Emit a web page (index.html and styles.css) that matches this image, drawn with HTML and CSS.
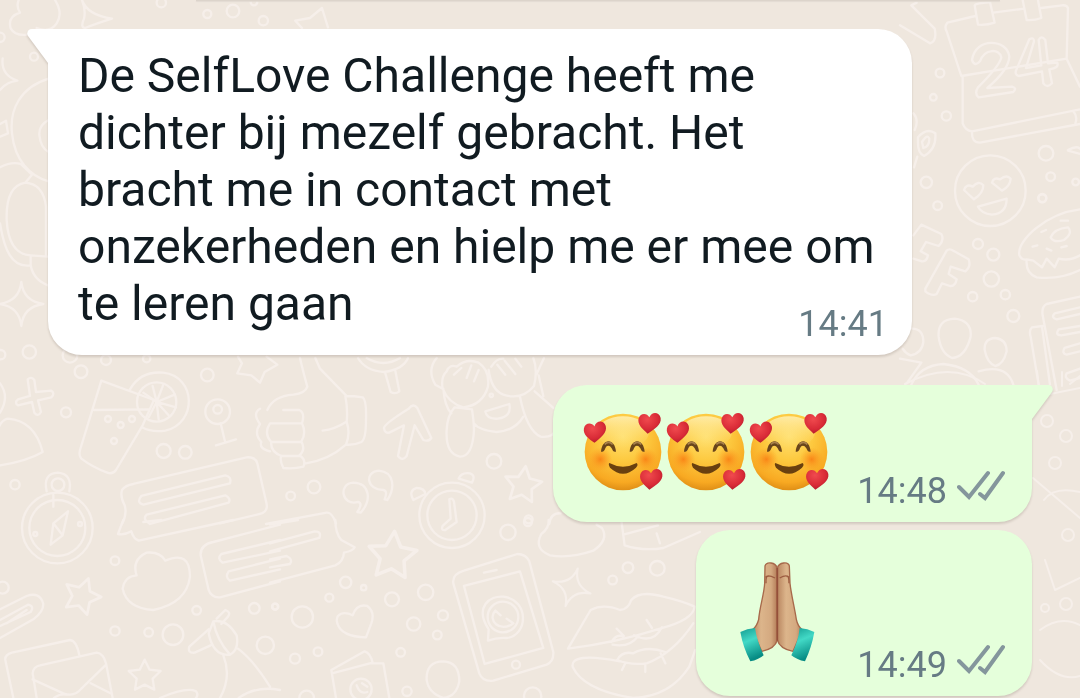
FILE: index.html
```html
<!DOCTYPE html>
<html lang="nl">
<head>
<meta charset="utf-8">
<meta name="viewport" content="width=device-width, initial-scale=1">
<title>Chat</title>
<link rel="stylesheet" href="styles.css">
</head>
<body>
<svg class="wallpaper" viewBox="0 0 1080 698" preserveAspectRatio="xMinYMin slice" aria-hidden="true">
  <defs>
    <path id="star" d="M0-44 15-14 48-10 24 13 29 46 0 31-29 46-24 13-48-10-15-14Z"/>
    <path id="spark" d="M0-66Q6-8 66 0Q6 8 0 66Q-6 8-66 0Q-6-8 0-66Z"/>
  </defs>
  <!-- top left -->
  <g transform="scale(.3333)">
    <path d="M56 0Q48 20 60 38Q22 50 32 85Q45 108 80 104M165 0Q190 40 170 70Q150 100 110 84M246 0Q262 45 336 56Q290 70 256 84Q240 84 252 56Q258 30 246 0M886 62 930 54 966 24 984 82M886 62 906 84"/>
    <circle cx="622" cy="42" r="12"/><circle cx="699" cy="33" r="19"/><circle cx="790" cy="62" r="14"/><circle cx="484" cy="8" r="14"/><circle cx="102" cy="170" r="12"/><circle cx="0" cy="112" r="14"/><circle cx="762" cy="6" r="10"/>
    <path d="M8 175Q2 225 52 242Q20 246 0 270M146 236C60 262 28 330 36 400C44 480 90 530 146 544M146 360Q116 375 118 405Q122 445 146 456M0 372 18 362 24 400 0 410M0 502Q34 484 62 492L96 524 76 548M0 670C12 745 34 805 92 796Q100 840 144 856M76 548C30 556 18 600 20 660C24 730 50 764 92 766L144 770M76 548Q130 552 138 620V766M92 766V796"/>
    <use href="#spark" x="64" y="912"/>
    <circle cx="88" cy="1056" r="20"/><circle cx="2" cy="1064" r="14"/>
  </g>
  <!-- left middle -->
  <g transform="translate(0 350) scale(.3333)">
    <circle cx="210" cy="16" r="22"/><circle cx="243" cy="65" r="19"/><circle cx="318" cy="30" r="15"/><circle cx="440" cy="26" r="11"/><circle cx="622" cy="75" r="19"/><circle cx="198" cy="187" r="15"/><circle cx="45" cy="404" r="14"/><circle cx="491" cy="303" r="21"/><circle cx="556" cy="307" r="19"/>
    <path d="M83 88Q94 78 103 90L108 126 154 122Q166 130 154 142L114 151 123 186Q114 202 103 188L96 156 54 166Q42 158 54 148L90 138ZM0 100Q30 140 0 188M-10 250Q0 210 24 206Q104 212 128 306Q80 334 0 346"/>
    <path d="M304 92 462 150 428 226 348 360Q338 374 322 368Q278 352 244 326Q236 316 240 300ZM282 180 446 178M390 118Q422 62 490 68C590 80 592 220 496 242Q455 248 426 232"/>
    <circle cx="470" cy="156" r="59"/><path d="M470 156 430 128M470 156 458 108M470 156 490 104M470 156 524 134M470 156 528 172M470 156 506 196M470 156 476 208M470 156 446 202"/>
    <circle cx="324" cy="207" r="9"/><circle cx="396" cy="207" r="9"/><circle cx="362" cy="225" r="9"/><circle cx="342" cy="273" r="9"/>
    <circle cx="653" cy="185" r="37"/><circle cx="653" cy="178" r="13"/><path d="M662 220 676 278M648 286 708 268M714 20 726 40 712 70 754 76 780 98 794 66 832 44 800 20"/>
    <path d="M366 522Q382 492 374 466 360 440 366 420 376 406 400 402L740 322Q766 320 772 340L800 462Q804 486 780 492L660 520M424 438 676 376Q696 380 690 400L430 464Q408 458 424 438ZM440 494 676 436Q694 446 686 458L450 522Q426 508 440 494Z"/>
    <circle cx="174" cy="404" r="19"/><path d="M140 424Q128 370 174 368Q218 372 208 424M160 435V470"/>
    <circle cx="172" cy="534" r="106"/><circle cx="172" cy="534" r="84"/>
    <path d="M204 484 188 556 152 584 160 520ZM160 520 188 556"/>
    <circle cx="240" cy="522" r="6"/><circle cx="106" cy="552" r="6"/>
  </g>
  <!-- centre: thumb, arrow, clock, waving figure -->
  <g transform="translate(270 350) scale(.3333)">
    <path d="M90 24Q98 60 112 110Q106 130 70 134Q10 138-8 180M136 24 150 56 228 136M40 180H88Q106 188 96 220 110 250 94 274 108 300 88 316 110 330 100 350 70 358 40 354 28 330 34 318 0 304 4 276-20 250 0 220H96M4 276H94M34 318H88M-30 176Q-54 190-30 222Q-50 250-26 276Q-34 296 0 304M158 242Q194 238 228 216M226 138Q254 138 278 142Q290 150 288 210Q288 268 274 276Q254 286 228 284Q242 250 230 216Q234 180 226 138M228 284Q176 330 108 340"/>
    <path d="M264 24Q286 62 342 66Q400 58 414 24M290 24Q340 54 390 24M346 70 362 126Q376 134 388 124L376 62"/>
    <path d="M342 234Q342 222 416 176Q430 158 442 174L484 264Q476 276 460 270L434 226 410 318Q396 336 384 318L402 226 358 248Q344 250 342 234Z"/>
    <path d="M500 24Q470 60 496 104L518 116M518 116Q512 80 530 64Q538 42 560 50Q590 24 626 38Q660 60 654 110Q638 166 580 172Q536 160 518 116M552 74 574 54M590 84 604 46M612 94 626 60M656 60Q664 120 700 134Q756 152 792 108Q804 60 790 24M664 50Q680 24 700 26M682 44 706 74M704 32 736 72M736 26 754 50M800 72 822 24M806 76 820 138M520 116Q524 170 544 190M606 178Q612 218 612 240 608 320 570 320 526 312 530 240 532 196 554 172ZM612 220Q626 240 680 246Q736 242 760 200M750 140Q770 240 812 260 850 264 856 240M794 124 850 174M646 184 718 162Q726 200 684 206Q650 208 646 184Z"/>
    <circle cx="664" cy="136" r="5"/><circle cx="672" cy="334" r="22"/><circle cx="132" cy="411" r="19"/><circle cx="62" cy="438" r="13"/><circle cx="776" cy="508" r="12"/>
    <path d="M262 486Q280 460 264 456C214 470 204 400 250 398C300 400 306 450 272 488ZM344 448Q354 422 340 420C290 420 282 366 326 362C376 366 374 418 352 450Z"/>
    <use href="#star" transform="translate(760 399) rotate(8) scale(1.15)"/>
    <circle cx="546" cy="496" r="98"/><circle cx="546" cy="496" r="74"/>
    <path d="M430 450Q414 422 440 414 464 414 466 432ZM566 386Q574 366 600 370 618 376 606 398ZM538 448Q548 442 552 455L560 516 526 540Q512 542 518 528L542 506ZM-12 522 170 488Q186 486 198 520M838 522Q842 488 872 490"/>
  </g>
  <!-- bottom left -->
  <g transform="translate(0 520) scale(.3333)">
    <path d="M370 0Q362 20 354 42Q374 46 394 34Q400 56 416 62L700 0M430 6 484 0"/>
    <circle cx="345" cy="122" r="13"/><circle cx="8" cy="203" r="18"/><circle cx="345" cy="333" r="14"/><circle cx="446" cy="337" r="13"/><circle cx="519" cy="344" r="31"/><circle cx="590" cy="271" r="13"/><circle cx="763" cy="265" r="16"/><circle cx="796" cy="376" r="26"/><circle cx="826" cy="260" r="9"/>
    <path d="M410 166Q394 120 440 98Q480 94 496 122Q570 90 570 170Q560 250 460 270Q380 264 368 206Q374 168 410 166Z"/>
    <use href="#star" transform="translate(248 223) rotate(20) scale(1.15)"/>
    <use href="#star" transform="translate(434 463)"/>
    <path d="M840 14 640 66Q600 74 602 106L626 210Q634 234 660 232L840 184M840 60 664 102Q650 116 668 128L840 92M840 116 686 154Q674 172 690 182L840 148"/>
    <path d="M0 268 80 228Q120 214 130 252Q130 276 100 298L0 354M0 300 84 254Q104 258 92 276L0 318M20 310 80 270"/>
    <path d="M40 534 16 420Q14 404 36 398L210 360Q230 362 238 406M110 534 98 460Q100 440 120 436L290 398Q310 400 318 430L338 534M98 478 190 520Q224 532 244 506L316 436M162 534Q180 520 200 524M272 490 336 522"/>
    <path d="M650 296 676 270Q694 276 684 290L664 312M626 328 568 380Q562 400 584 398L632 376M640 304Q680 296 710 346 718 390 690 404 640 410 626 340ZM640 304Q650 360 690 404M714 386Q760 420 810 500M670 406Q696 470 660 534M716 534Q770 496 840 510M480 534Q560 500 588 514Q596 524 588 534"/>
  </g>
  <!-- bottom centre: phone, lips -->
  <g transform="translate(270 520) scale(.3333)">
    <path d="M0 14 84 0M196 0Q196 40 214 60L254 82Q250 92 222 98Q220 126 196 136L0 188M0 70 134 34Q156 34 148 54L0 94M0 118 50 108Q70 118 60 132L0 142"/>
    <use href="#star" transform="translate(368 100) rotate(5) scale(1.5)"/>
    <circle cx="227" cy="187" r="17"/><circle cx="281" cy="203" r="8"/><circle cx="178" cy="233" r="12"/><circle cx="15" cy="260" r="9"/><circle cx="97" cy="291" r="32"/><circle cx="366" cy="238" r="21"/><circle cx="467" cy="217" r="23"/><circle cx="431" cy="312" r="20"/><circle cx="519" cy="286" r="15"/><circle cx="502" cy="345" r="13"/><circle cx="75" cy="416" r="15"/><circle cx="144" cy="395" r="13"/><circle cx="392" cy="397" r="13"/><circle cx="411" cy="514" r="14"/><circle cx="714" cy="37" r="23"/><circle cx="774" cy="6" r="12"/><circle cx="1028" cy="180" r="13"/><circle cx="1074" cy="143" r="16"/><circle cx="1162" cy="145" r="22"/><circle cx="788" cy="528" r="26"/><circle cx="110" cy="534" r="22"/>
    <path d="M204 288Q220 272 248 286Q260 250 292 258Q316 276 304 310L288 352Q214 350 202 310Q198 296 204 288ZM470 480Q468 424 520 424 568 426 568 484 560 530 520 534 476 520 470 480ZM198 534 184 450 284 394Q302 400 308 428L186 460M300 430H340L358 534"/>
    <circle cx="273" cy="508" r="32"/><path d="M260 496Q270 524 292 516M276 490 292 500"/>
    <path d="M582 152 742 102Q768 102 778 124L850 396Q852 424 830 434L670 482Q638 486 628 460L550 190Q546 162 582 152ZM582 198 750 154 820 384 644 432ZM642 158 680 150"/>
    <circle cx="738" cy="434" r="12"/><path d="M654 362 656 328C612 260 660 226 700 230C780 240 774 348 710 354Q680 352 654 362ZM676 272C650 300 690 340 730 310M676 272 692 286M730 310 710 296"/><circle cx="699" cy="291" r="46"/>
    <use href="#spark" transform="translate(905 202) rotate(18) scale(.9)"/>
    <path d="M836 0Q838 24 814 42Q790 86 840 106Q900 116 970 92 1018 60 996 24L980 14M1054 0 1064 76Q1120 94 1180 84L1290 36M1060 44 1164 16M1160 40 1170 70"/>
    <path d="M894 386 962 270Q1000 250 1050 270 1074 270 1084 240 1110 210 1180 230 1240 244 1274 260Q1270 300 1170 326Q1040 368 894 386ZM1024 366Q1040 340 1060 350M1028 374Q1080 384 1106 346M1092 346Q1150 374 1176 322M1040 326 1062 348M1130 300 1146 324M1050 424Q900 396 908 440Q940 510 1090 534Q1200 530 1258 440L1276 390M1270 310Q1210 400 1130 430 1080 436 1042 420 1056 392 1090 400 1130 376 1186 396M1066 430 1056 450M1126 430V456M1172 400 1186 430"/>
  </g>
  <!-- top right: calendar, emoji -->
  <g transform="translate(900) scale(.3333)">
    <path d="M0 76 90 130Q112 124 104 86L34 16 50 8M226 48 142 68Q132 80 140 94L184 228 500 176 504 24Q500 14 486 16L424 24M280 38 372 26M224 16Q226 10 270 6L284 68Q260 76 234 74ZM368 0 380 60Q402 62 424 54L414 0M188 228V370Q196 392 216 394L540 328M500 176 540 260M216 394Q214 428 240 428L540 372M520 334Q534 350 526 370"/>
    <path d="M216 180C226 110 322 116 328 170Q326 210 262 264L336 260Q352 264 340 276L236 292Q222 280 234 262Q300 196 304 172C300 146 254 144 240 184Q224 202 216 180ZM348 212 388 118Q402 110 402 124L378 204 424 196 416 120Q424 104 436 120L444 190 472 188Q478 204 448 208L456 250Q442 266 430 250L426 214 356 228Q344 224 348 212Z"/>
    <circle cx="120" cy="219" r="13"/><circle cx="100" cy="292" r="10"/><circle cx="139" cy="348" r="14"/><circle cx="79" cy="547" r="17"/><circle cx="438" cy="460" r="22"/><circle cx="452" cy="530" r="13"/><circle cx="527" cy="546" r="10"/><circle cx="427" cy="594" r="12"/>
    <path d="M40 340Q58 360 44 390M54 412Q80 382 106 400 110 448 72 468 54 460 54 430ZM66 426Q82 400 88 416 88 440 70 444ZM52 470 42 502M504 450Q530 436 540 446M540 462 504 452"/>
    <circle cx="271" cy="572" r="106"/>
    <path d="M222 598 192 570Q198 550 218 560 236 540 250 556 250 580 222 598ZM306 572 276 548Q280 530 300 538 320 522 332 536 330 560 306 572Z"/>
  </g>
  <g transform="translate(900 190) scale(.3333)">
    <path d="M234 50 320 26Q320 70 276 74Q244 70 234 50Z"/>
    <circle cx="113" cy="47" r="13"/><circle cx="427" cy="25" r="12"/><circle cx="234" cy="162" r="15"/><circle cx="280" cy="194" r="18"/><circle cx="274" cy="267" r="23"/><circle cx="218" cy="320" r="14"/><circle cx="316" cy="314" r="14"/><circle cx="340" cy="378" r="18"/>
    <path d="M40 136 64 104 124 132Q134 150 116 168L78 156 62 184 84 196Q80 216 66 214L40 206M76 296 140 182Q148 174 160 182L206 208Q214 230 196 244L152 230 146 252 170 268Q166 290 150 288L126 280 110 312Q96 320 76 304Z"/>
    <path d="M540 58C440 70 350 150 358 196Q366 212 380 208Q376 250 410 262Q480 270 540 240M380 208 400 212 426 232 440 206 464 232 476 206Q510 214 540 196M452 142Q462 116 504 112 520 130 492 150 462 160 452 142ZM482 92H504M424 126 438 120M398 170 412 166M440 176 454 182M484 172 500 168"/>
    <path d="M36 416Q70 416 70 456 66 490 32 496 16 490 8 476M116 440Q112 388 164 386 216 392 212 440 196 502 156 504 122 490 116 440ZM254 480Q252 446 286 444 320 448 320 484 310 524 286 528 262 520 254 480ZM0 506 64 518 20 580M34 584Q60 526 130 522 210 530 236 584M236 544Q320 520 340 584M540 320 440 342Q424 350 428 376L470 600M428 408 396 412Q386 420 392 440L416 584M426 410 450 584M540 352 464 370Q452 384 470 388L540 372M540 408 476 418Q464 436 484 436L540 426M540 460 494 474Q484 490 500 494L540 484M540 536 500 550Q492 564 510 572L540 564"/>
  </g>
  <!-- right edge -->
  <path d="M1037 371 1040 396 1080 388M1062 386V372M1070 384 1080 376M1033 478 1080 518M1044 500Q1054 486 1080 492M1045 560 1055 590 1080 578M1040 630Q1060 615 1080 625M1040 660Q1060 682 1080 676M905 384Q950 360 985 384"/>
  <circle cx="1047" cy="421" r="6"/><circle cx="1066" cy="436" r="6"/><circle cx="1055" cy="463" r="6"/><circle cx="1068" cy="535" r="6"/><circle cx="1045" cy="608" r="4"/><circle cx="1066" cy="604" r="6"/>
</svg>

<svg class="defs" aria-hidden="true">
  <defs>
    <radialGradient id="skin" cx=".5" cy=".3" r=".7"><stop offset="0" stop-color="#ffe070"/><stop offset=".45" stop-color="#fdc93f"/><stop offset=".85" stop-color="#f8a922"/><stop offset="1" stop-color="#e08f16"/></radialGradient>
    <linearGradient id="shine" x2="0" y2="1"><stop offset="0" stop-color="#fff3bd" stop-opacity=".8"/><stop offset="1" stop-color="#ffe070" stop-opacity="0"/></linearGradient>
    <radialGradient id="blush"><stop offset="0" stop-color="#f97c12" stop-opacity=".85"/><stop offset="1" stop-color="#fb9a1f" stop-opacity="0"/></radialGradient>
    <radialGradient id="love" cx=".4" cy=".3" r=".8"><stop offset="0" stop-color="#f04a4e"/><stop offset=".6" stop-color="#d92b37"/><stop offset="1" stop-color="#a81729"/></radialGradient>
    <linearGradient id="palm"><stop offset="0" stop-color="#b98660"/><stop offset=".35" stop-color="#dcb58b"/><stop offset=".75" stop-color="#d4a980"/><stop offset="1" stop-color="#b37b57"/></linearGradient>
    <linearGradient id="cuff" x2=".3" y2="1"><stop offset="0" stop-color="#139b90"/><stop offset=".45" stop-color="#42d9c6"/><stop offset="1" stop-color="#078c84"/></linearGradient>
    <path id="heart" d="M-6 32C-22 18-38 4-33-14C-28-31-8-31-1-17C7-36 29-33 33-15C36 5 14 19-6 32Z" fill="url(#love)"/>
    <symbol id="hearts-face" viewBox="66 62 249 249">
      <circle cx="189" cy="185" r="115" fill="url(#skin)"/>
      <ellipse cx="189" cy="126" rx="78" ry="48" fill="url(#shine)"/>
      <circle cx="121" cy="207" r="36" fill="url(#blush)"/><circle cx="257" cy="207" r="36" fill="url(#blush)"/>
      <path d="M123 184C126 142 165 142 168 184C160 186 158 180 155 174C149 164 140 164 136 174C133 182 130 186 123 184ZM209 184C212 142 251 142 254 184C246 186 244 180 241 174C235 164 226 164 222 174C219 182 216 186 209 184Z" fill="#69451b"/>
      <path d="M134 162Q146 150 158 162M220 162Q232 150 244 162" fill="none" stroke="#a8804a" stroke-width="5"/>
      <path d="M148 218Q189 240 230 218Q236 224 228 232Q189 268 150 232Q144 222 148 218Z" fill="#69400f"/>
      <use href="#heart" transform="translate(106 125) rotate(-6)"/>
      <use href="#heart" transform="translate(269 98)"/>
      <use href="#heart" transform="translate(274 266)"/>
    </symbol>
    <symbol id="ticks" viewBox="0 0 48 32">
      <path d="M2 17 12 27 31 3M23 24 28 28 46 3" fill="none" stroke="#84969c" stroke-width="4" stroke-linecap="round"/>
    </symbol>
  </defs>
</svg>

<main class="chat">
  <div class="previous"></div>

  <article class="bubble incoming">
    <svg class="tail" viewBox="0 0 22 34" aria-hidden="true"><path d="M22 0H5C1 0-1 4 1 7L21 34H22Z"/></svg>
    <p class="message">De SelfLove Challenge heeft me dichter bij mezelf gebracht. Het bracht me in contact met onzekerheden en hielp me er mee om te leren gaan <time class="time">14:41</time></p>
  </article>

  <article class="bubble outgoing hearts">
    <svg class="tail" viewBox="0 0 22 34" aria-hidden="true"><path d="M0 0H17C21 0 23 4 21 7L1 34H0Z"/></svg>
    <div class="faces" role="img" aria-label="Drie lachende gezichten met hartjes">
      <svg class="face"><use href="#hearts-face"/></svg>
      <svg class="face"><use href="#hearts-face"/></svg>
      <svg class="face"><use href="#hearts-face"/></svg>
    </div>
    <div class="meta"><time class="time">14:48</time><svg class="ticks" role="img" aria-label="Bezorgd"><use href="#ticks"/></svg></div>
  </article>

  <article class="bubble outgoing thanks">
    <svg class="hands" viewBox="40 30 264 312" role="img" aria-label="Gevouwen handen">
      <path d="M172 54C168 36 140 34 136 48L135 100C134 130 120 170 117 208Q112 228 98 240L126 304Q166 296 173 270Z" fill="url(#palm)" stroke="#a7694b" stroke-width="4"/>
      <path d="M173 54C178 36 206 34 209 48L211 100C214 130 224 170 230 208Q234 228 248 240L220 304Q180 296 173 270Z" fill="url(#palm)" stroke="#a7694b" stroke-width="4"/>
      <path d="M137 82Q144 72 166 84M209 82Q200 72 180 84M146 80Q138 74 139 100M200 80Q208 74 208 100" fill="none" stroke="#9d5d41" stroke-width="4"/>
      <path d="M173 54V272" stroke="#95503a" stroke-width="5"/>
      <path d="M62 246Q82 236 106 234Q112 274 132 316Q116 330 92 334Q70 292 62 246Z" fill="url(#cuff)"/>
      <path d="M240 234Q264 236 284 246Q276 292 256 334Q232 330 215 316Q236 274 240 234Z" fill="url(#cuff)"/>
    </svg>
    <div class="meta"><time class="time">14:49</time><svg class="ticks" role="img" aria-label="Bezorgd"><use href="#ticks"/></svg></div>
  </article>
</main>
</body>
</html>
```
FILE: styles.css
```css
* {
  box-sizing: border-box;
}

body {
  margin: 0;
  min-height: 100vh;
  position: relative;
  overflow-x: hidden;
  background: #efe7de;
  color: #111b21;
  font-family: Roboto, "Liberation Sans", sans-serif;
}

.wallpaper {
  position: absolute;
  inset: 0;
  width: 100%;
  height: 100%;
  fill: none;
  stroke: #f6efea;
  stroke-linejoin: round;
  stroke-linecap: round;
  stroke-width: 2;
}

.wallpaper g {
  stroke-width: 7;
}

.defs {
  position: absolute;
  width: 0;
  height: 0;
}

.chat {
  position: relative;
  display: flex;
  flex-direction: column;
  padding: 0 48px;
}

.previous {
  height: 1px;
  margin: 0 32px 28px 148px;
  background: #dcd4cb;
  box-shadow: 0 1px 1px #e2dad1;
}

.bubble {
  position: relative;
  border-radius: 34px;
  filter: drop-shadow(0 2px 1px rgba(60, 45, 30, 0.16));
}

.incoming {
  align-self: flex-start;
  width: 864px;
  max-width: 100%;
  padding: 18px 30px 10px;
  border-top-left-radius: 0;
  background: #fff;
}

.outgoing {
  align-self: flex-end;
  display: flex;
  align-items: flex-end;
  padding: 0 27px 10px 29px;
  background: #e5ffdb;
}

.tail {
  position: absolute;
  top: 0;
  width: 22px;
  height: 34px;
}

.incoming .tail {
  right: 100%;
  margin-right: -1px;
  fill: #fff;
}

.outgoing .tail {
  left: 100%;
  margin-left: -1px;
  fill: #e5ffdb;
}

.message {
  display: flow-root;
  margin: 0;
  font-size: 48px;
  line-height: 57px;
}

.time {
  color: #667b84;
  font-size: 36px;
  line-height: 42px;
}

.message .time {
  float: right;
  margin: 28px -6px 0 0;
}

.meta {
  display: flex;
  align-items: flex-start;
  gap: 10px;
}

.ticks {
  width: 48px;
  height: 32px;
}

.hearts {
  gap: 26px;
  margin-top: 30px;
  padding-top: 26px;
  border-top-right-radius: 0;
}

.faces {
  display: flex;
  margin-bottom: 18px;
}

.face {
  width: 83px;
  height: 83px;
}

.thanks {
  gap: 36px;
  margin-top: 8px;
  padding-top: 30px;
  padding-left: 37px;
}

.hands {
  width: 88px;
  height: 104px;
  margin-bottom: 22px;
}
```
